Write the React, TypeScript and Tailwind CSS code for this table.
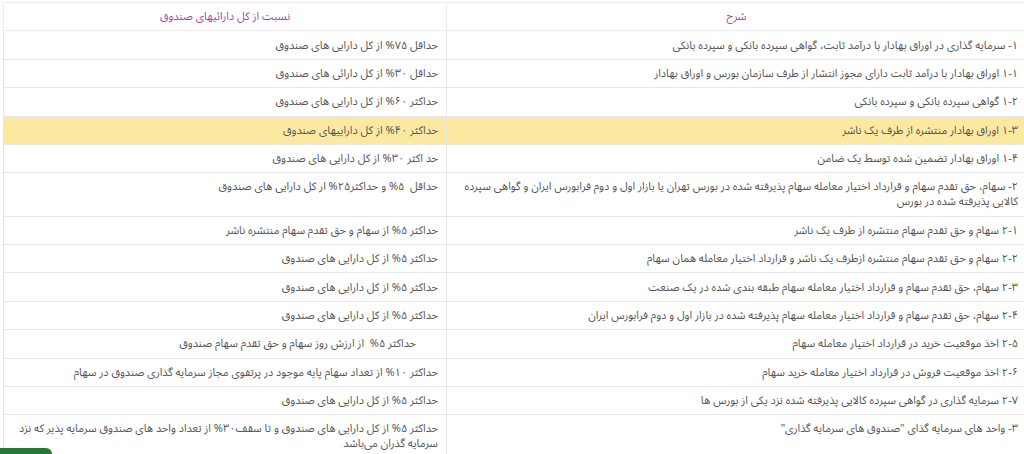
const rows: { desc: React.ReactNode; ratio: React.ReactNode; highlight?: boolean; ratioClass?: string }[] = [
  {
    desc: "۱- سرمایه گذاری در اوراق بهادار با درآمد ثابت، گواهی سپرده بانکی و سپرده بانکی",
    ratio: "حداقل ۷۵% از کل دارایی های صندوق",
  },
  {
    desc: "۱-۱ اوراق بهادار با درآمد ثابت دارای مجوز انتشار از طرف سازمان بورس و اوراق بهادار",
    ratio: "حداقل ۳۰% از کل دارائی های صندوق",
  },
  { desc: "۱-۲ گواهی سپرده بانکی و سپرده بانکی", ratio: "حداکثر ۶۰% از کل دارایی های صندوق" },
  {
    desc: "۱-۳ اوراق بهادار منتشره از طرف یک ناشر",
    ratio: "حداکثر ۴۰% از کل داراییهای صندوق",
    highlight: true,
  },
  { desc: "۱-۴ اوراق بهادار تضمین شده توسط یک ضامن", ratio: "حد اکثر ۳۰% از کل دارایی های صندوق" },
  {
    desc: (
      <>
        ۲- سهام، حق تقدم سهام و قرارداد اختیار معامله سهام پذیرفته شده در بورس تهران یا بازار اول و دوم فرابورس ایران و گواهی سپرده
        <br />
        کالایی پذیرفته شده در بورس
      </>
    ),
    ratio: "حداقل\u00a0 ۵% و حداکثر۲۵% ار کل دارایی های صندوق",
  },
  { desc: "۲-۱ سهام و حق تقدم سهام منتشره از طرف یک ناشر", ratio: "حداکثر ۵% از سهام و حق تقدم سهام منتشره ناشر" },
  {
    desc: "۲-۲ سهام و حق تقدم سهام منتشره ازطرف یک ناشر و قرارداد اختیار معامله همان سهام",
    ratio: "حداکثر ۵% از کل دارایی های صندوق",
  },
  {
    desc: "۲-۳ سهام، حق تقدم سهام و قرارداد اختیار معامله سهام طبقه بندی شده در یک صنعت",
    ratio: "حداکثر ۵% از کل دارایی های صندوق",
  },
  {
    desc: "۲-۴ سهام، حق تقدم سهام و قرارداد اختیار معامله سهام پذیرفته شده در بازار اول و دوم فرابورس ایران",
    ratio: "حداکثر ۵% از کل دارایی های صندوق",
  },
  {
    desc: "۲-۵ اخذ موقعیت خرید در قرارداد اختیار معامله سهام",
    ratio: "حداکثر ۵%\u00a0 از ارزش روز سهام و حق تقدم سهام صندوق",
    ratioClass: "pr-[30px]",
  },
  {
    desc: "۲-۶ اخذ موقعیت فروش در قرارداد اختیار معامله خرید سهام",
    ratio: "حداکثر ۱۰% از تعداد سهام پایه موجود در پرتفوی مجاز سرمایه گذاری صندوق در سهام",
  },
  {
    desc: "۲-۷ سرمایه گذاری در گواهی سپرده کالایی پذیرفته شده نزد یکی از بورس ها",
    ratio: "حداکثر ۵% از کل دارایی های صندوق",
  },
  {
    desc: "۳- واحد های سرمایه گذای \"صندوق های سرمایه گذاری\"",
    ratio: (
      <>
        حداکثر ۵% از کل دارایی های صندوق و تا سقف۳۰% از تعداد واحد های صندوق سرمایه پذیر که نزد
        <br />
        سرمایه گذران می‌باشد
      </>
    ),
  },
];

export default function App() {
  return (
    <div className="relative h-[454px] w-[1024px] overflow-hidden bg-white font-['Noto_Sans_Arabic','DejaVu_Sans',sans-serif]">
      <table
        dir="rtl"
        className="ml-[3px] mt-[2px] w-[1023px] table-fixed border-collapse text-[11px] leading-[15px] text-[#555555]"
      >
        <colgroup>
          <col className="w-[580px]" />
          <col className="w-[443px]" />
        </colgroup>
        <thead>
          <tr className="border-b border-[#d9d9d9]">
            <th className="border border-[#ececec] py-[6.2px] text-center font-normal text-[#a24aa6]">شرح</th>
            <th className="border border-[#ececec] py-[6.2px] text-center font-normal text-[#a24aa6]">
              نسبت از کل دارائیهای صندوق
            </th>
          </tr>
        </thead>
        <tbody>
          {rows.map((row, i) => (
            <tr key={i} className={row.highlight ? "bg-[#fbe9a1]" : "bg-white"}>
              <td className="whitespace-nowrap border border-[#e6e6e6] px-2 py-[6.2px] text-right align-top">
                {row.desc}
              </td>
              <td
                className={`whitespace-nowrap border border-[#e6e6e6] px-2 py-[6.2px] text-right align-top ${row.ratioClass ?? ""}`}
              >
                {row.ratio}
              </td>
            </tr>
          ))}
        </tbody>
      </table>
      <div className="absolute bottom-0 left-0 h-[6px] w-[52px] rounded-tr-[10px] bg-[#1f7a36]" />
    </div>
  );
}
